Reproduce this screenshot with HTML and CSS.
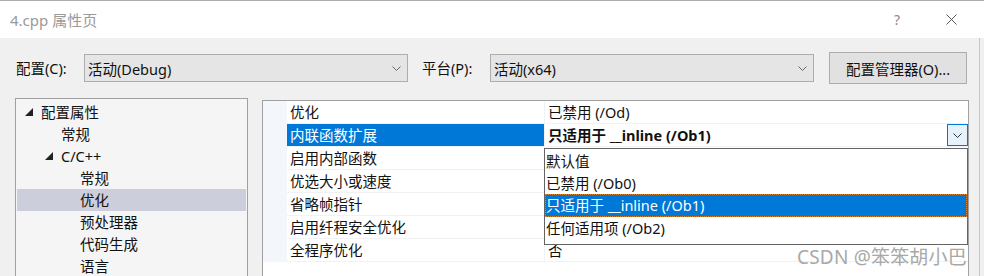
FILE: index.html
```html
<!DOCTYPE html>
<html lang="zh-CN">
<head>
  <meta charset="UTF-8">
  <title>4.cpp 属性页</title>
  <link rel="stylesheet" href="styles.css">
</head>
<body>
<div class="titlebar">
  <span class="title">4.cpp 属性页</span>
  <span class="help">?</span>
  <span class="close">
    <svg width="11" height="11" viewBox="0 0 11 11"><path d="M0.5 0.5L10.5 10.5M10.5 0.5L0.5 10.5" stroke="#555" stroke-width="1" fill="none"/></svg>
  </span>
</div>

<div class="main">
  <div class="config-row">
    <span class="lbl lbl-config">配置(C):</span>
    <div class="combo combo-config">
      <span>活动(Debug)</span>
      <svg class="chev" width="9" height="5" viewBox="0 0 9 5"><path d="M0.5 0.5L4.5 4.5L8.5 0.5" stroke="#666" fill="none"/></svg>
    </div>
    <span class="lbl lbl-platform">平台(P):</span>
    <div class="combo combo-platform">
      <span>活动(x64)</span>
      <svg class="chev" width="9" height="5" viewBox="0 0 9 5"><path d="M0.5 0.5L4.5 4.5L8.5 0.5" stroke="#666" fill="none"/></svg>
    </div>
    <button class="btn">配置管理器(O)...</button>
  </div>

  <div class="panes">
    <ul class="tree">
      <li class="lvl0"><svg class="tri" width="8" height="8" viewBox="0 0 8 8"><polygon points="8,0 8,8 0,8" fill="#222"/></svg>配置属性</li>
      <li class="lvl1">常规</li>
      <li class="lvl1"><svg class="tri" width="8" height="8" viewBox="0 0 8 8"><polygon points="8,0 8,8 0,8" fill="#222"/></svg>C/C++</li>
      <li class="lvl2">常规</li>
      <li class="lvl2 picked">优化</li>
      <li class="lvl2">预处理器</li>
      <li class="lvl2">代码生成</li>
      <li class="lvl2">语言</li>
    </ul>

    <div class="grid">
      <div class="gutter"></div>
      <div class="rows">
        <div class="row"><div class="name">优化</div><div class="value">已禁用 (/Od)</div></div>
        <div class="row current">
          <div class="name">内联函数扩展</div>
          <div class="value"><b>只适用于 __inline (/Ob1)</b>
            <span class="dropbtn"><svg width="9" height="5" viewBox="0 0 9 5"><path d="M0.5 0.5L4.5 4.5L8.5 0.5" stroke="#333" fill="none"/></svg></span>
          </div>
        </div>
        <div class="row"><div class="name">启用内部函数</div><div class="value"></div></div>
        <div class="row"><div class="name">优选大小或速度</div><div class="value"></div></div>
        <div class="row"><div class="name">省略帧指针</div><div class="value"></div></div>
        <div class="row"><div class="name">启用纤程安全优化</div><div class="value"></div></div>
        <div class="row"><div class="name">全程序优化</div><div class="value">否</div></div>
      </div>

      <ul class="droplist">
        <li>默认值</li>
        <li>已禁用 (/Ob0)</li>
        <li class="on">只适用于 __inline (/Ob1)</li>
        <li>任何适用项 (/Ob2)</li>
      </ul>
    </div>
  </div>

  <div class="edge"></div>
</div>

<div class="watermark">CSDN @笨笨胡小巴</div>
</body>
</html>
```

FILE: styles.css
```css
* {
  margin: 0;
  padding: 0;
  box-sizing: border-box;
}

body {
  width: 984px;
  height: 276px;
  overflow: hidden;
  position: relative;
  background: #f0f0f0;
  font-family: "Noto Sans", "Noto Sans CJK SC", sans-serif;
  font-size: 14.5px;
  color: #111;
}

.titlebar {
  height: 38px;
  background: #fff;
  border-top: 1px solid #adadad;
  display: flex;
  align-items: center;
}

.title {
  padding-left: 10px;
  color: #9a9a9a;
  font-size: 15px;
  flex: 1;
}

.help {
  color: #8a8a8a;
  font-size: 14px;
  width: 16px;
  margin-right: 36px;
}

.close {
  display: flex;
  margin-right: 27px;
}

.main {
  position: relative;
  height: 238px;
  overflow: hidden;
}

.edge {
  position: absolute;
  right: 4px;
  top: 0;
  bottom: 0;
  width: 1px;
  background: #c8c8c8;
}

.config-row {
  display: flex;
  align-items: center;
  padding: 14px 0 0 16px;
  height: 46px;
}

.lbl {
  line-height: 20px;
}

.lbl-config {
  width: 68px;
}

.lbl-platform {
  width: 68px;
  margin-left: 14px;
}

.combo {
  height: 28px;
  background: #e5e5e5;
  border: 1px solid #adadad;
  display: flex;
  align-items: center;
  padding: 0 6px 0 3px;
  justify-content: space-between;
}

.combo-config,
.combo-platform {
  width: 324px;
}

.btn {
  margin-left: 15px;
  width: 138px;
  height: 32px;
  background: #e1e1e1;
  border: 1px solid #adadad;
  font: inherit;
  color: #111;
}

.panes {
  display: flex;
  padding: 14px 0 0 15px;
}

.tree {
  list-style: none;
  width: 233px;
  height: 178px;
  overflow: hidden;
  background: #f5f5f5;
  border: 1px solid #a0a0a0;
  border-bottom: none;
  padding: 2px 1px 0 1px;
}

.tree li {
  height: 22px;
  line-height: 22px;
  display: flex;
  align-items: center;
  white-space: nowrap;
}

.tree .tri {
  margin-right: 8px;
}

.tree .lvl0 {
  padding-left: 8px;
}

.tree .lvl1 {
  padding-left: 44px;
}

.tree .lvl1 .tri {
  margin-left: -16px;
}

.tree .lvl2 {
  padding-left: 63px;
}

.tree .picked {
  background: #cccedb;
}

.grid {
  position: relative;
  margin: 2px 0 0 14px;
  width: 707px;
  height: 176px;
  background: #fff;
  border: 1px solid #a0a0a0;
  border-bottom: none;
  display: flex;
  align-items: flex-start;
}

.gutter {
  width: 24px;
  height: 161px;
  background: #f3f6fb;
}

.rows {
  flex: 1;
}

.row {
  display: flex;
  height: 23px;
  border-bottom: 1px solid #f0f2f5;
}

.row .name {
  width: 258px;
  padding-left: 3px;
  line-height: 22px;
  border-right: 1px solid #f0f2f5;
}

.row .value {
  flex: 1;
  padding-left: 3px;
  line-height: 22px;
  display: flex;
  justify-content: space-between;
}

.row.current .name {
  background: #0078d7;
  color: #fff;
}

.row.current b {
  font-weight: bold;
}

.dropbtn {
  width: 21px;
  height: 22px;
  background: #e5f1fb;
  border: 1px solid #0078d7;
  display: flex;
  align-items: center;
  justify-content: center;
}

.droplist {
  position: absolute;
  left: 281px;
  top: 47px;
  width: 424px;
  height: 97px;
  list-style: none;
  background: #fff;
  border: 1px solid #646464;
  padding-top: 1px;
}

.droplist li {
  height: 22px;
  line-height: 22px;
  padding-left: 1px;
}

.droplist li.on {
  height: 23px;
  background: #0078d7;
  color: #fff;
  outline: 1px dotted #d9822b;
  outline-offset: -1px;
}

.watermark {
  position: absolute;
  left: 797px;
  top: 244px;
  font-size: 19px;
  line-height: 26px;
  color: #a8a8a8;
  letter-spacing: 0.2px;
}
```
